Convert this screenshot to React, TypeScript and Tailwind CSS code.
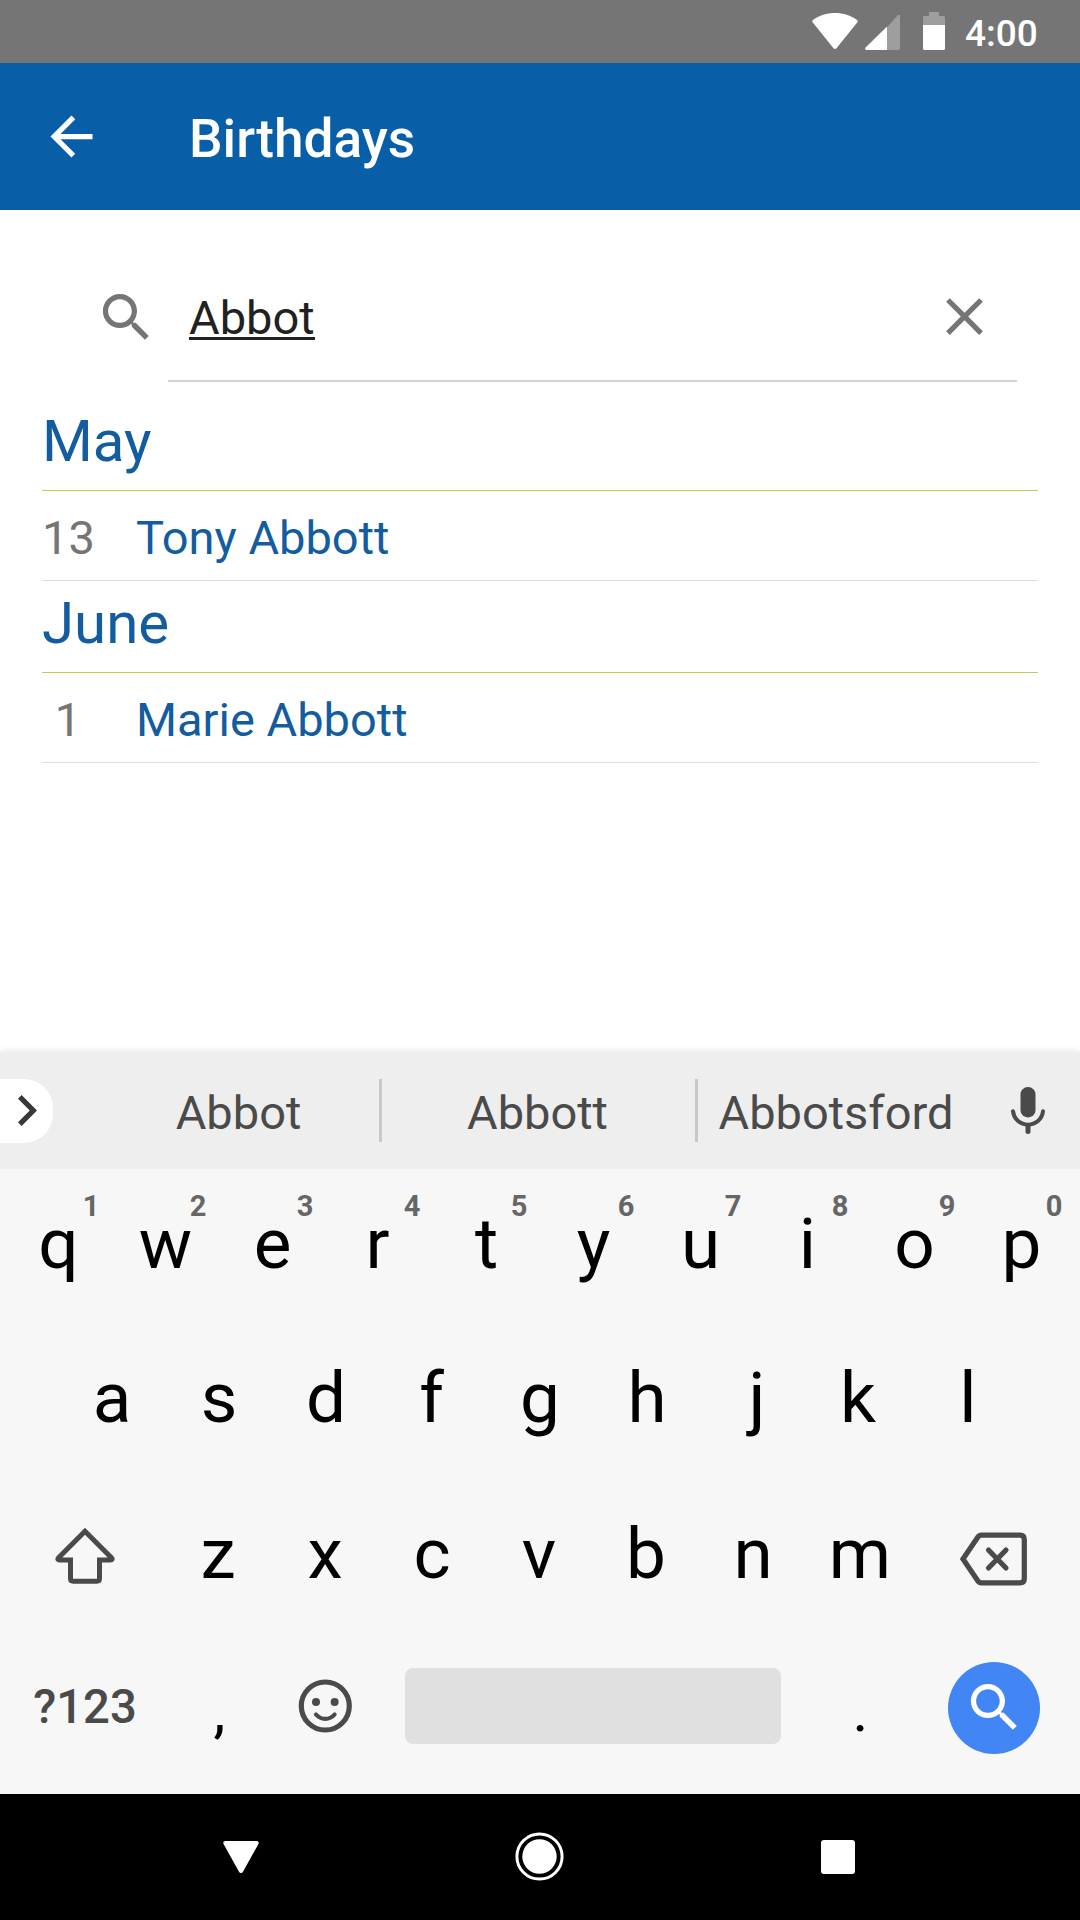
import React from "react";

const SEARCH_PATH =
  "M15.5 14h-.79l-.28-.27C15.41 12.59 16 11.11 16 9.5 16 5.91 13.09 3 9.5 3S3 5.91 3 9.5 5.91 16 9.5 16c1.61 0 3.09-.59 4.23-1.57l.27.28v.79l5 4.99L20.49 19l-4.99-5zm-6 0C7.01 14 5 11.99 5 9.5S7.01 5 9.5 5 14 7.01 14 9.5 11.99 14 9.5 14z";

function StatusBar() {
  return (
    <div className="flex h-[63px] items-start bg-[#757575] text-white">
      <svg className="ml-[812px] mt-[12px] h-[38px] w-[46px] shrink-0" viewBox="0 0 46 38" fill="currentColor">
        <path d="M.8 10.6C-.1 9.7 0 8.6 1 7.9 7.3 3.3 14.7 1 23 1s15.7 2.3 22 6.9c1 .7 1.100 1.800.2 2.700L24.500 36.200c-.9 1.100-2.100 1.100-3 0z" />
      </svg>
      <svg className="ml-[7px] mt-[14px] h-[36px] w-[35px] shrink-0" viewBox="0 0 35 36" fill="currentColor">
        <path d="M22 13.500 32.500 1.500C33.500.4 35 .7 35 2.200V34c0 1.200-.8 2-2 2H22z" opacity=".3" />
        <path d="M22 12.500V36H1.500C0 36-.4 34.600.6 33.600z" />
      </svg>
      <svg className="ml-[23px] mt-[12px] h-[38px] w-[22px] shrink-0" viewBox="0 0 22 38" fill="currentColor">
        <path d="M0 13V5.500C0 4.500.7 4 1.500 4H6V0h10v4h4.500c.8 0 1.500.5 1.500 1.500V13z" opacity=".3" />
        <path d="M0 13h22v23.500c0 .8-.7 1.500-1.500 1.500h-19C.7 38 0 37.300 0 36.500z" />
      </svg>
      <span className="ml-[20px] mt-[13px] text-[37px] font-medium leading-[42px]">4:00</span>
    </div>
  );
}

function AppBar() {
  return (
    <header className="flex h-[147px] items-center bg-[#085ea7] text-white">
      <svg className="ml-[39.500px] mb-[1px] h-[63px] w-[63px]" viewBox="0 0 24 24" fill="currentColor">
        <path d="M20 11H7.830l5.590-5.590L12 4l-8 8 8 8 1.410-1.410L7.830 13H20v-2z" />
      </svg>
      <h1 className="ml-[86.500px] mt-[5px] text-[53.200px] font-medium leading-[62px]">Birthdays</h1>
    </header>
  );
}

function SearchField() {
  return (
    <div className="mt-[45px] flex pr-[63px]">
      <svg className="ml-[95px] mt-[31px] h-[63px] w-[63px] text-[#757575]" viewBox="0 0 24 24" fill="currentColor">
        <path d={SEARCH_PATH} />
      </svg>
      <div className="ml-[10px] flex h-[127px] flex-1 items-center border-b-2 border-[#d1d1d1] pl-[21px] text-[#212121]">
        <span className="mt-[4px] border-b-[3px] border-[#212121] text-[47px] leading-[38px]">Abbot</span>
        <svg className="ml-auto mr-[21px] mb-[2px] h-[63px] w-[63px] text-[#757575]" viewBox="0 0 24 24" fill="currentColor">
          <path d="M19 6.410 17.590 5 12 10.590 6.410 5 5 6.410 10.590 12 5 17.590 6.410 19 12 13.410 17.590 19 19 17.590 13.410 12z" />
        </svg>
      </div>
    </div>
  );
}

const MONTHS = [
  { month: "May", day: "13", name: "Tony Abbott" },
  { month: "June", day: "1", name: "Marie Abbott" },
];

function BirthdayList() {
  return (
    <div className="mx-[42px] mt-[17px]">
      {MONTHS.map((m) => (
        <section key={m.month}>
          <h2 className="h-[92px] border-b border-[#c9cb4f] text-[58.200px] leading-[84px] text-[#125c9f]">{m.month}</h2>
          <div className="flex h-[90px] border-b border-[#dedede] pt-[5px] text-[47px] leading-[84px]">
            <span className="w-[52px] text-center text-[#757575]">{m.day}</span>
            <span className="ml-[42px] text-[#125c9f]">{m.name}</span>
          </div>
        </section>
      ))}
    </div>
  );
}

function SuggestionStrip() {
  return (
    <div className="flex h-[117px] items-center bg-[#eeeeee] text-[47px] text-[#4a4a4a] shadow-[0_-1px_7px_rgba(0,0,0,0.1)]">
      <div className="flex h-[64px] w-[52.5px] items-center rounded-r-[29px] bg-white">
        <svg className="ml-[18px] h-[31px] w-[19px]" viewBox="8.590 6 7.410 12" fill="#383838">
          <path d="M10 6 8.590 7.410 13.170 12l-4.580 4.590L10 18l6-6z" />
        </svg>
      </div>
      <span className="ml-[44.500px] w-[282px] pt-[4px] pl-[1px] text-center leading-[64px]">Abbot</span>
      <div className="h-[63px] w-[3px] bg-[#c8c8c8]" />
      <span className="w-[313px] pt-[4px] pr-[2px] text-center leading-[64px]">Abbott</span>
      <div className="h-[63px] w-[3px] bg-[#c8c8c8]" />
      <span className="w-[276px] pt-[4px] text-center leading-[64px]">Abbotsford</span>
      <svg className="ml-[37px] h-[48px] w-[34px]" viewBox="0 0 34 48" fill="none" stroke="currentColor" strokeLinecap="round">
        <rect x="9.500" y="0" width="15" height="30.500" rx="7.300" fill="currentColor" stroke="none" />
        <path d="M2 24.300c1 8.200 7.500 13.400 15 13.400s14-5.200 15-13.400" strokeWidth="4" />
        <path d="M17 40v4.500" strokeWidth="5" />
      </svg>
    </div>
  );
}

// Optical side bearings for letters that do not sit centred in their cell.
const NUDGE: Record<string, string> = {
  r: "pr-[4px]",
  f: "pr-[3px]",
  k: "pr-[6px]",
  j: "pl-[6px]",
};

function Key({ label, hint }: { label: string; hint?: string }) {
  return (
    <div className="relative flex w-[107px] items-center justify-center leading-none">
      <span className={NUDGE[label]}>{label}</span>
      {hint && (
        <span className="absolute left-[75px] top-[-19px] w-[22px] text-center text-[29px] font-bold leading-[34px] text-[#666666]">
          {hint}
        </span>
      )}
    </div>
  );
}

function Keyboard() {
  return (
    <div className="h-[625px] bg-[#f7f7f7] text-[71px] text-black">
      <div className="flex h-[150px] items-center pl-[5px] pb-[1px]">
        {"qwertyuiop".split("").map((k, i) => (
          <Key key={k} label={k} hint={String((i + 1) % 10)} />
        ))}
      </div>
      <div className="flex h-[156px] items-center pl-[58.500px]">
        {"asdfghjkl".split("").map((k) => (
          <Key key={k} label={k} />
        ))}
      </div>
      <div className="flex h-[156px] items-center">
        <svg className="ml-[55px] mr-[49.500px] mt-[5px] h-[58px] w-[60px] shrink-0" viewBox="0 0 60 58" fill="none" stroke="#4a4a4a" strokeWidth="5">
          <path d="M30 4.200 3.600 30.700C2.200 32.200 3 33 4.500 33H15.500V51.500q0 2.700 2.700 2.700h23.600q2.700 0 2.700-2.700V33H55.500c1.500 0 2.300-.8.9-2.300z" />
        </svg>
        {"zxcvbnm".split("").map((k) => (
          <Key key={k} label={k} />
        ))}
        <svg className="ml-[46.500px] mt-[11px] h-[54px] w-[68px] shrink-0" viewBox="0 0 68 54" fill="none" stroke="#4a4a4a" strokeWidth="5.200">
          <path d="M21.500 3.100H60q4.300 0 4.300 4.300V46.600q0 4.300-4.300 4.300H21.500q-2.300 0-3.600-1.900L3 27 17.900 5q1.300-1.900 3.600-1.900z" />
          <path d="M28.500 18 46 36M46 18 28.500 36" strokeLinecap="round" />
        </svg>
      </div>
      <div className="flex h-[153px] items-center">
        <span className="mb-[2px] w-[165px] pl-[5px] text-center text-[47.250px] font-medium leading-[60px] text-[#4a4a4a]">?123</span>
        <div className="pl-[1px] pt-[6px] text-[60px]">
          <Key label="," />
        </div>
        <svg className="mb-[4px] ml-[25px] h-[54px] w-[54px]" viewBox="0 0 54 54" fill="none" stroke="#4a4a4a">
          <circle cx="27.300" cy="27" r="24" strokeWidth="5.200" />
          <circle cx="18" cy="23" r="4" fill="#4a4a4a" stroke="none" />
          <circle cx="36.600" cy="23" r="4" fill="#4a4a4a" stroke="none" />
          <path d="M18 35.500c5 5.800 13.600 5.800 18.600 0" strokeWidth="4.200" strokeLinecap="round" />
        </svg>
        <div className="mb-[3px] ml-[53px] h-[76px] w-[376px] rounded-lg bg-[#e0e0e0]" />
        <div className="ml-[26px] pt-[6px] text-[60px]">
          <Key label="." />
        </div>
        <div className="ml-[34px] flex h-[92px] w-[92px] items-center justify-center rounded-full bg-[#4285f4]">
          <svg className="h-[63px] w-[63px]" viewBox="0 0 24 24" fill="white">
            <path d={SEARCH_PATH} />
          </svg>
        </div>
      </div>
    </div>
  );
}

function NavBar() {
  return (
    <nav className="flex h-[126px] bg-black">
      <svg className="ml-[223px] mt-[47px] h-[33px] w-[36px]" viewBox="0 0 36 33" fill="white">
        <path d="M2.500 0h31c2 0 2.700 1.600 1.800 3.200L20 30.700c-1 1.800-3 1.800-4 0L.7 3.200C-.2 1.600.5 0 2.500 0z" />
      </svg>
      <svg className="ml-[256px] mt-[38px] h-[50px] w-[50px]" viewBox="0 0 50 50" fill="white">
        <circle cx="24.500" cy="24.500" r="22.600" fill="none" stroke="white" strokeWidth="3" />
        <circle cx="24.500" cy="24.500" r="17.200" />
      </svg>
      <div className="ml-[256px] mt-[46px] h-[34px] w-[34px] rounded-[3px] bg-white" />
    </nav>
  );
}

export default function App() {
  return (
    <div className="flex h-[1920px] w-[1080px] flex-col overflow-hidden bg-white font-['Roboto',sans-serif]">
      <StatusBar />
      <AppBar />
      <main className="flex-1">
        <SearchField />
        <BirthdayList />
      </main>
      <SuggestionStrip />
      <Keyboard />
      <NavBar />
    </div>
  );
}
